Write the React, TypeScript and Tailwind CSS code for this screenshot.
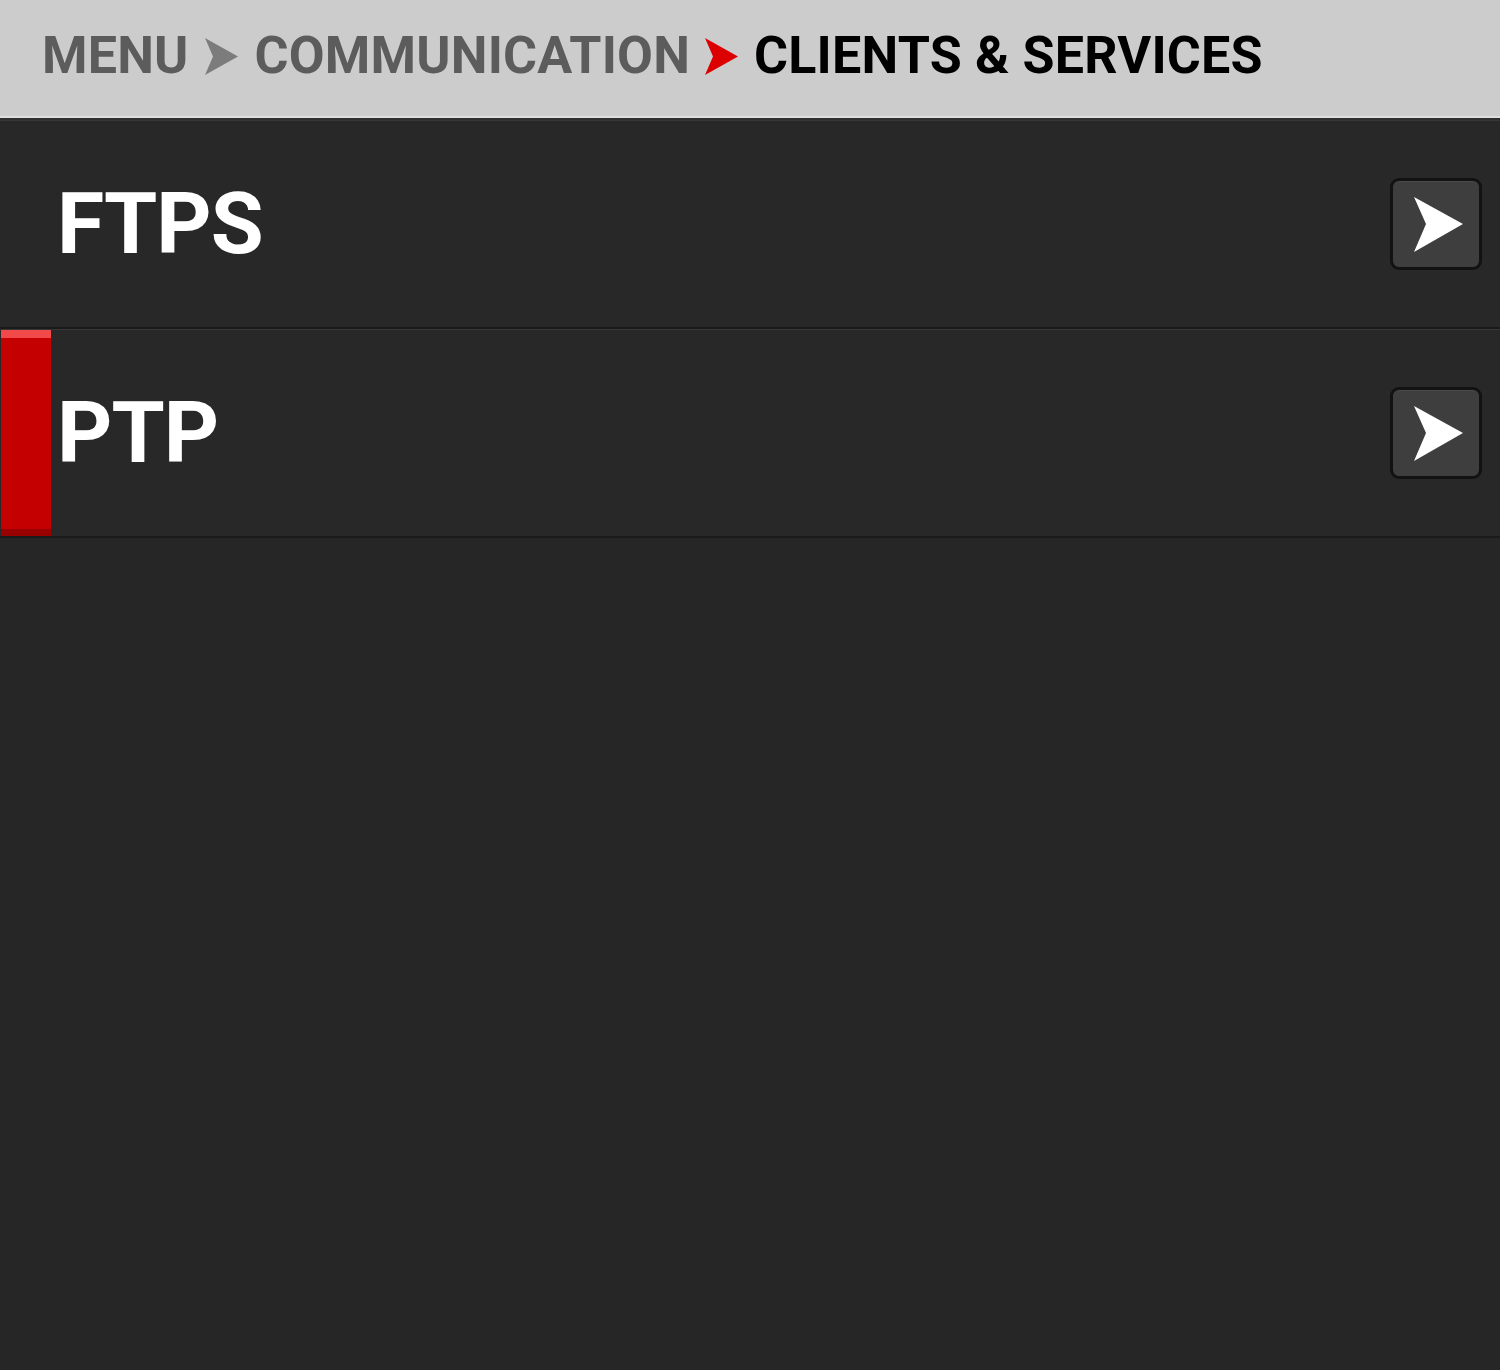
import React from "react";

const Chevron = ({ className }: { className?: string }) => (
    <svg viewBox="0 0 33 37" className={className}>
        <polygon points="0,0 33,18.5 0,37 8,18.5" fill="currentColor" />
    </svg>
);

const GoButton = () => (
    <button className="mr-[18px] w-[92px] h-[92px] rounded-[9px] border-[3px] border-[#121212] bg-[#3e3e3e] flex items-center justify-center shadow-[inset_0_1px_0_#4a4a4a]">
        <svg viewBox="0 0 49 55" className="w-[49px] h-[55px] ml-[4px]">
            <polygon points="0,0 49,27 0,55 12,27" fill="#ffffff" />
        </svg>
    </button>
);

const rows = [
    { id: "ftps", label: "FTPS", active: false },
    { id: "ptp", label: "PTP", active: true },
];

export default function App() {
    return (
        <div className="w-[1500px] h-[1370px] bg-[#262626] flex flex-col font-['Roboto',sans-serif]">
            {/* Breadcrumb header */}
            <header className="h-[120px] shrink-0 bg-[#cccccc] border-b-2 border-[#2e2e2e] shadow-[inset_0_-2px_0_#dedede] flex items-center pl-[42px] pb-[6px] font-bold text-[52px] tracking-[0.2px] leading-none">
                <span className="text-[#5c5c5c]">MENU</span>
                <Chevron className="w-[33px] h-[37px] ml-[16px] mr-[17px] text-[#7c7c7c]" />
                <span className="text-[#5c5c5c]">COMMUNICATION</span>
                <Chevron className="w-[33px] h-[37px] ml-[15px] mr-[16px] text-[#dd0000]" />
                <span className="text-black">CLIENTS &amp; SERVICES</span>
            </header>

            {/* Menu rows */}
            <div className="flex flex-col">
                {rows.map((row) => (
                    <div
                        key={row.id}
                        className="h-[209px] flex items-stretch bg-[#282828] border-t border-[#373737] border-b-2 border-b-[#1a1a1a]"
                    >
                        <div className="w-[51px] shrink-0 flex flex-col pl-px">
                            {row.active && (
                                <>
                                    <div className="h-[8px] bg-[#f24a4a]" />
                                    <div className="flex-1 bg-[#c40000]" />
                                    <div className="h-[7px] bg-[#990000]" />
                                </>
                            )}
                        </div>
                        <div className="flex-1 flex items-center pl-[6px] text-white font-bold text-[86px] tracking-[-1px] leading-none">
                            {row.label}
                        </div>
                        <div className="flex items-center">
                            <GoButton />
                        </div>
                    </div>
                ))}
            </div>
        </div>
    );
}
